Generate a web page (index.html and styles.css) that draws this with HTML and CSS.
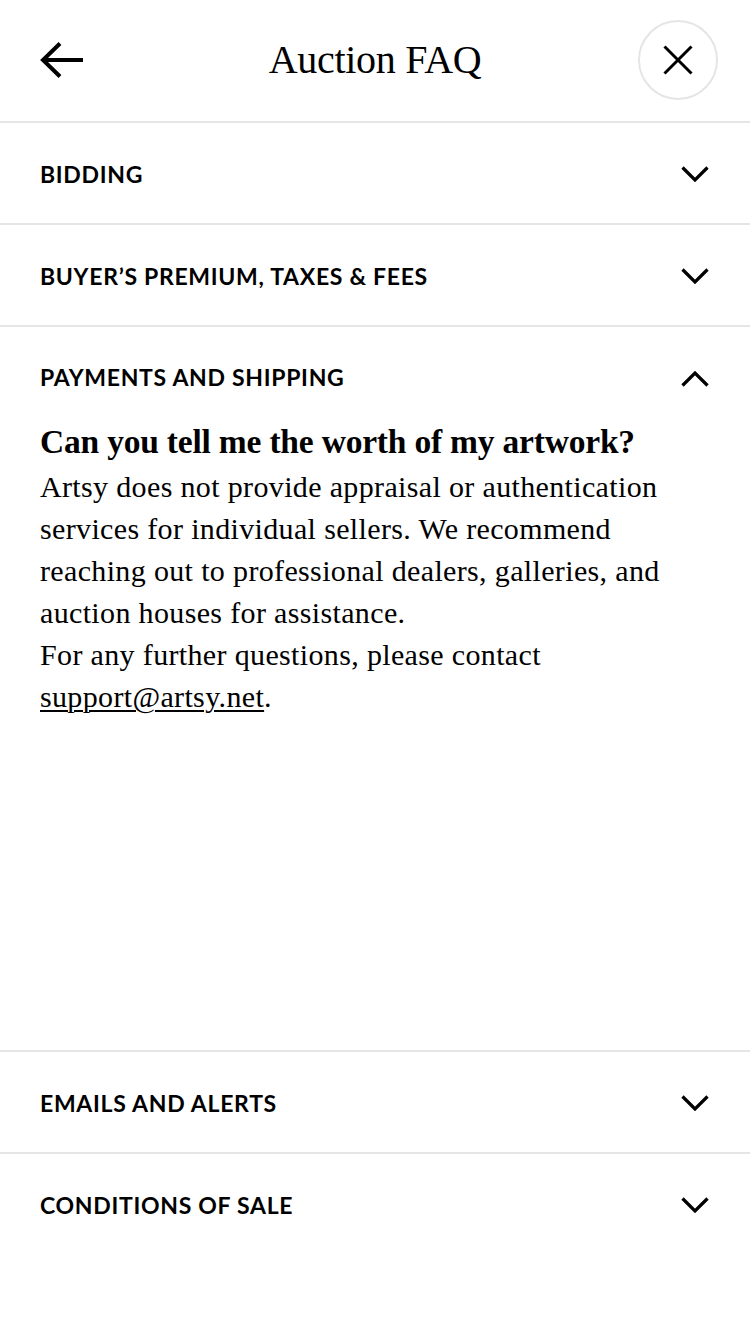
FILE: index.html
```html
<!DOCTYPE html>
<html lang="en">
<head>
<meta charset="utf-8">
<title>Auction FAQ</title>
<link rel="stylesheet" href="styles.css">
</head>
<body>
<div class="screen">
  <header class="topbar">
    <button class="back-btn" aria-label="Back">
      <svg width="44" height="36" viewBox="0 0 44 36" fill="none" stroke="#000" stroke-width="4" stroke-linecap="butt" stroke-linejoin="miter">
        <path d="M20 1.5 L3 18 L20 34.5"/>
        <path d="M3 18 H43"/>
      </svg>
    </button>
    <h1 class="title">Auction FAQ</h1>
    <button class="close-btn" aria-label="Close">
      <svg width="30" height="30" viewBox="0 0 30 30" fill="none" stroke="#000" stroke-width="3">
        <path d="M1.5 1.5 L28.5 28.5 M28.5 1.5 L1.5 28.5"/>
      </svg>
    </button>
  </header>

  <section class="accordion">
    <div class="item">
      <div class="item-head">
        <span class="label">Bidding</span>
        <svg class="chev" width="28" height="16" viewBox="0 0 28 16" fill="none" stroke="#000" stroke-width="3.2"><path d="M1.5 1.5 L14 14 L26.5 1.5"/></svg>
      </div>
    </div>
    <div class="item">
      <div class="item-head">
        <span class="label">Buyer’s Premium, Taxes &amp; Fees</span>
        <svg class="chev" width="28" height="16" viewBox="0 0 28 16" fill="none" stroke="#000" stroke-width="3.2"><path d="M1.5 1.5 L14 14 L26.5 1.5"/></svg>
      </div>
    </div>
    <div class="item open">
      <div class="item-head">
        <span class="label">Payments and Shipping</span>
        <svg class="chev up" width="28" height="16" viewBox="0 0 28 16" fill="none" stroke="#000" stroke-width="3.2"><path d="M1.5 14.5 L14 2 L26.5 14.5"/></svg>
      </div>
      <div class="item-body">
        <h2 class="question">Can you tell me the worth of my artwork?</h2>
        <p class="answer">Artsy does not provide appraisal or authentication services for individual sellers. We recommend reaching out to professional dealers, galleries, and auction houses for assistance.</p>
        <p class="answer">For any further questions, please contact <a href="#" class="mail">support@artsy.net</a>.</p>
      </div>
    </div>
    <div class="item">
      <div class="item-head">
        <span class="label">Emails and Alerts</span>
        <svg class="chev" width="28" height="16" viewBox="0 0 28 16" fill="none" stroke="#000" stroke-width="3.2"><path d="M1.5 1.5 L14 14 L26.5 1.5"/></svg>
      </div>
    </div>
    <div class="item last">
      <div class="item-head">
        <span class="label">Conditions of Sale</span>
        <svg class="chev" width="28" height="16" viewBox="0 0 28 16" fill="none" stroke="#000" stroke-width="3.2"><path d="M1.5 1.5 L14 14 L26.5 1.5"/></svg>
      </div>
    </div>
  </section>
</div>
</body>
</html>
```

FILE: styles.css
```css
* { box-sizing: border-box; }

html, body {
  margin: 0;
  padding: 0;
  background: #fff;
  color: #000;
}

.screen {
  width: 750px;
  min-height: 1334px;
  display: flex;
  flex-direction: column;
}

.topbar {
  height: 123px;
  display: grid;
  grid-template-columns: 1fr auto 1fr;
  align-items: center;
  padding: 0 32px 2px 32px;
  border-bottom: 2px solid #e5e5e5;
}

.back-btn, .close-btn {
  background: none;
  border: none;
  padding: 0;
  margin: 0;
  cursor: pointer;
  display: flex;
  align-items: center;
  justify-content: center;
}

.back-btn {
  justify-self: start;
  width: 44px;
  height: 36px;
  margin-left: 8px;
}

.title {
  margin: 0;
  font-family: "Liberation Serif", "Times New Roman", serif;
  font-weight: 400;
  font-size: 40px;
  line-height: 1;
  letter-spacing: -0.3px;
}

.close-btn {
  justify-self: end;
  width: 80px;
  height: 80px;
  border: 2px solid #e5e5e5;
  border-radius: 50%;
}

.accordion {
  display: flex;
  flex-direction: column;
}

.item {
  border-bottom: 2px solid #e5e5e5;
}

.item.last {
  border-bottom: none;
}

.item-head {
  height: 100px;
  display: flex;
  align-items: center;
  justify-content: space-between;
  padding: 2px 41px 0 40px;
}

.item.open .item-head {
  height: 92px;
  padding-top: 8px;
}

.chev.up {
  margin-top: 3px;
}

.label {
  font-family: "Lato", "Liberation Sans", sans-serif;
  font-weight: 700;
  font-size: 23px;
  line-height: 24px;
  text-transform: uppercase;
  letter-spacing: 0.7px;
}

.chev {
  display: block;
}

.item-body {
  min-height: 631px;
  padding: 3px 40px 0;
}

.question {
  margin: 0 0 4px;
  font-family: "Liberation Serif", "Times New Roman", serif;
  font-weight: 700;
  font-size: 33.5px;
  line-height: 40px;
  letter-spacing: -0.2px;
}

.answer {
  margin: 0;
  font-family: "Liberation Serif", "Times New Roman", serif;
  font-weight: 400;
  font-size: 30px;
  line-height: 42px;
  letter-spacing: 0.35px;
}

.mail {
  color: #000;
  text-decoration: underline;
  text-decoration-thickness: 2px;
  text-underline-offset: 3px;
}
```
